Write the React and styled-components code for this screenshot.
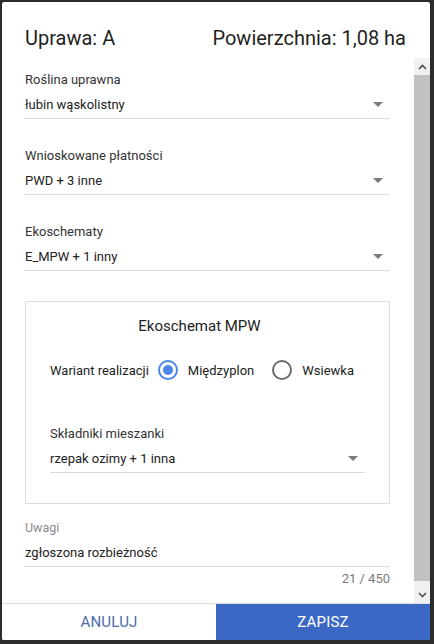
import styled, { createGlobalStyle } from 'styled-components';

const GlobalStyle = createGlobalStyle`
  html, body {
    margin: 0;
    padding: 0;
    background: #2a2d2a;
  }
  body {
    font-family: Roboto, "Liberation Sans", Arial, sans-serif;
    color: #212121;
  }
`;

const Page = styled.div`
  width: 434px;
  height: 644px;
  padding: 2px 4px 4px 2px;
  box-sizing: border-box;
  display: flex;
`;

const Dialog = styled.div`
  flex: 1;
  display: flex;
  flex-direction: column;
  background: #fff;
  border-radius: 2px;
  overflow: hidden;
`;

const Header = styled.div`
  height: 56px;
  flex: none;
  display: flex;
  justify-content: space-between;
  align-items: center;
  padding: 16px 24px 0 23px;
  box-sizing: border-box;
  font-size: 20px;
  color: #1f1f1f;
`;

const Body = styled.div`
  flex: 1;
  display: flex;
  min-height: 0;
  border-bottom: 1px solid #dedede;
`;

const Content = styled.div`
  flex: 1;
  padding: 12px 24px 0 23px;
  display: flex;
  flex-direction: column;
`;

const Field = styled.div`
  display: flex;
  flex-direction: column;
  margin-bottom: ${p => p.$mb ?? 27}px;
`;

const Label = styled.div`
  font-size: ${p => (p.$muted ? 12.5 : 13)}px;
  line-height: 20px;
  color: ${p => (p.$muted ? '#8a8a8a' : '#333')};
`;

const ValueRow = styled.div`
  display: flex;
  align-items: center;
  justify-content: space-between;
  height: 28px;
  font-size: 13px;
  color: #222;
  border-bottom: 1px solid #dcdcdc;
  padding-right: 7px;
`;

const Caret = styled.span`
  width: 0;
  height: 0;
  border-left: 5px solid transparent;
  border-right: 5px solid transparent;
  border-top: 5px solid #7a7a7a;
`;

const Panel = styled.div`
  border: 1px solid #dedede;
  margin: 3px 0 14px;
  padding: 14px 24px 30px 24px;
  display: flex;
  flex-direction: column;
`;

const PanelTitle = styled.div`
  text-align: center;
  font-size: 15px;
  line-height: 20px;
  color: #222;
  padding-right: 16px;
`;

const RadioRow = styled.div`
  display: flex;
  align-items: center;
  height: 24px;
  margin: 22px 0 42px;
  font-size: 13px;
  color: #222;
  white-space: nowrap;
`;

const RadioLabel = styled.span`
  flex: none;
  margin-right: ${p => p.$gap}px;
`;

const RadioCircle = styled.span`
  flex: none;
  width: 20px;
  height: 20px;
  box-sizing: border-box;
  border-radius: 50%;
  border: 2px solid ${p => (p.$checked ? '#4a86e8' : '#6b6b6b')};
  display: flex;
  align-items: center;
  justify-content: center;
  margin-right: 10px;
  &::after {
    content: '';
    width: 10px;
    height: 10px;
    border-radius: 50%;
    background: ${p => (p.$checked ? '#4a86e8' : 'transparent')};
  }
`;

const Counter = styled.div`
  text-align: right;
  font-size: 13px;
  color: #7a7a7a;
  margin-top: 4px;
`;

const Scrollbar = styled.div`
  width: 16px;
  flex: none;
  background: #f1f1f1;
  display: flex;
  flex-direction: column;
`;

const ScrollArrow = styled.div`
  height: 17px;
  flex: none;
  display: flex;
  align-items: center;
  justify-content: center;
`;

const Track = styled.div`
  flex: 1;
  display: flex;
  flex-direction: column;
  padding-bottom: 5px;
`;

const Thumb = styled.div`
  flex: 1;
  background: #c1c1c1;
`;

const Footer = styled.div`
  height: 36px;
  flex: none;
  display: flex;
`;

const FooterButton = styled.button`
  flex: 1;
  border: none;
  margin: 0;
  font-family: inherit;
  font-size: 15px;
  font-weight: 400;
  letter-spacing: 0.2px;
  text-transform: uppercase;
  background: ${p => (p.$primary ? '#3c68c5' : '#fff')};
  color: ${p => (p.$primary ? '#fff' : '#4b6eab')};
`;

const Chevron = ({ up }) => (
  <svg width="9" height="6" viewBox="0 0 9 6">
    <path
      d={up ? 'M1 5 L4.5 1.5 L8 5' : 'M1 1 L4.5 4.5 L8 1'}
      fill="none"
      stroke="#505050"
      strokeWidth="1.6"
    />
  </svg>
);

const Select = ({ label, value, mb }) => (
  <Field $mb={mb}>
    <Label>{label}</Label>
    <ValueRow>
      {value}
      <Caret />
    </ValueRow>
  </Field>
);

export default function App() {
  return (
    <Page>
      <GlobalStyle />
      <Dialog>
        <Header>
          <span>Uprawa: A</span>
          <span>Powierzchnia: 1,08 ha</span>
        </Header>

        <Body>
          <Content>
            <Select label="Roślina uprawna" value="łubin wąskolistny" />
            <Select label="Wnioskowane płatności" value="PWD + 3 inne" />
            <Select label="Ekoschematy" value="E_MPW + 1 inny" mb={27} />

            <Panel>
              <PanelTitle>Ekoschemat MPW</PanelTitle>
              <RadioRow>
                <RadioLabel $gap={9}>Wariant realizacji</RadioLabel>
                <RadioCircle $checked />
                <RadioLabel $gap={18}>Międzyplon</RadioLabel>
                <RadioCircle />
                <RadioLabel $gap={0}>Wsiewka</RadioLabel>
              </RadioRow>
              <Select label="Składniki mieszanki" value="rzepak ozimy + 1 inna" mb={0} />
            </Panel>

            <Field $mb={0}>
              <Label $muted>Uwagi</Label>
              <ValueRow>zgłoszona rozbieżność</ValueRow>
              <Counter>21 / 450</Counter>
            </Field>
          </Content>

          <Scrollbar>
            <ScrollArrow><Chevron up /></ScrollArrow>
            <Track><Thumb /></Track>
            <ScrollArrow><Chevron /></ScrollArrow>
          </Scrollbar>
        </Body>

        <Footer>
          <FooterButton>Anuluj</FooterButton>
          <FooterButton $primary>Zapisz</FooterButton>
        </Footer>
      </Dialog>
    </Page>
  );
}
